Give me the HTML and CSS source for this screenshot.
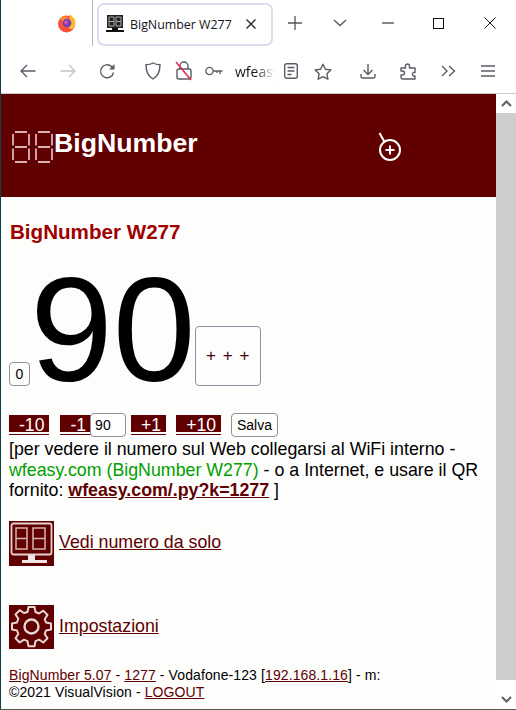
FILE: index.html
```html
<!DOCTYPE html>
<html lang="it">
<head>
  <meta charset="UTF-8" />
  <title>BigNumber W277</title>
  <link rel="stylesheet" href="styles.css">
</head>
<body>
  <div class="window">

    <!-- Browser tab strip -->
    <div class="tabbar">
      <svg class="ff-logo" width="20" height="20" viewBox="0 0 20 20">
        <circle cx="9.5" cy="11" r="8.5" fill="#f4503c"/>
        <path d="M13 1c1 2 4 3 5 6 1 3 0 6-1.500 8-2 2-4 1-5-1 3-1 4-4 2-6-1-2-1.500-4-.5-7z" fill="#fdb92e"/>
        <path d="M3 5c2-2 5-2 7-1 2 1 3 3 3 5l-4-1-3 1z" fill="#ff8a2c"/>
        <circle cx="10" cy="10" r="4.200" fill="#6a3fc0"/>
        <path d="M7 9c1-1.500 3-2 5-1-1 0-2 .5-2 1.500s1 1.500 2 1c-1 1.500-4 1.500-5-1.500z" fill="#e8569a"/>
      </svg>
      <div class="tab-sep"></div>
      <div class="tab">
        <svg class="favicon" width="18" height="18" viewBox="0 0 18 18">
          <rect x="1" y="0" width="16" height="13" fill="#222"/>
          <path d="M3 2h5v9H3zM10 2h5v9h-5zM3 6.500h5M10 6.500h5" fill="none" stroke="#aaa" stroke-width="1"/>
          <path d="M0 17h18v-2H12v-2H6v2H0z" fill="#111"/>
        </svg>
        <span class="tab-title">BigNumber W277</span>
        <svg class="tab-close" width="12" height="12" viewBox="0 0 12 12"><path d="M1.500 1.500l9 9M10.500 1.500l-9 9" stroke="#222" stroke-width="1.300"/></svg>
      </div>
      <svg class="tab-new" width="16" height="16" viewBox="0 0 16 16"><path d="M8 1v14M1 8h14" stroke="#55555f" stroke-width="1.300"/></svg>
      <svg class="tab-list" width="14" height="8" viewBox="0 0 14 8"><path d="M1 1l6 5.500L13 1" fill="none" stroke="#55555f" stroke-width="1.300"/></svg>
      <svg class="win-min" width="12" height="2" viewBox="0 0 12 2"><path d="M0 1h12" stroke="#111" stroke-width="1"/></svg>
      <svg class="win-max" width="11" height="11" viewBox="0 0 11 11"><rect x=".5" y=".5" width="10" height="10" fill="none" stroke="#111"/></svg>
      <svg class="win-close" width="12" height="12" viewBox="0 0 12 12"><path d="M.5.500l11 11M11.500.500l-11 11" stroke="#111" stroke-width="1"/></svg>
    </div>

    <!-- Browser toolbar -->
    <div class="toolbar">
      <svg class="ic ic-back" width="16" height="14" viewBox="0 0 16 14"><path d="M15.500 7H1M7 1L1 7l6 6" fill="none" stroke="#5b5b66" stroke-width="1.400"/></svg>
      <svg class="ic ic-fwd" width="16" height="14" viewBox="0 0 16 14"><path d="M.5 7H15M9 1l6 6-6 6" fill="none" stroke="#c4c2cc" stroke-width="1.400"/></svg>
      <svg class="ic ic-reload" width="17" height="17" viewBox="0 0 17 17"><path d="M14.500 9.500A6.500 6.500 0 1 1 12.500 3.500L15 6" fill="none" stroke="#5b5b66" stroke-width="1.400"/><path d="M15.500 1v5.500H10z" fill="#5b5b66"/></svg>
      <svg class="ic ic-shield" width="16" height="18" viewBox="0 0 16 18"><path d="M8 1c2 1.200 4 1.700 7 1.800 0 6-1 11-7 14.200C2 13.800 1 8.800 1 2.800 4 2.700 6 2.200 8 1z" fill="none" stroke="#5b5b66" stroke-width="1.400"/></svg>
      <svg class="ic ic-lock" width="18" height="20" viewBox="0 0 18 20"><path d="M4 8h10a2 2 0 0 1 2 2v6a2 2 0 0 1-2 2H4a2 2 0 0 1-2-2v-6a2 2 0 0 1 2-2zM5 8V5a4 4 0 0 1 8 0v3" fill="none" stroke="#5b5b66" stroke-width="1.400"/><path d="M1 1l15 18" stroke="#e22850" stroke-width="1.500"/></svg>
      <svg class="ic ic-key" width="18" height="10" viewBox="0 0 18 10"><circle cx="4.500" cy="5" r="3.600" fill="none" stroke="#5b5b66" stroke-width="1.300"/><path d="M8 5h9.500M15 5v3M12 5v2" stroke="#5b5b66" stroke-width="1.300" fill="none"/></svg>
      <span class="url">wfeasy</span>
      <svg class="ic ic-reader" width="14" height="16" viewBox="0 0 14 16"><rect x=".7" y=".7" width="12.600" height="14.600" rx="2" fill="none" stroke="#5b5b66" stroke-width="1.400"/><path d="M3.500 4.500h7M3.500 8h7M3.500 11.500h4" stroke="#5b5b66" stroke-width="1.300"/></svg>
      <svg class="ic ic-star" width="18" height="17" viewBox="0 0 18 17"><path d="M9 1.200l2.400 5 5.500.8-4 3.800 1 5.400L9 13.600l-4.900 2.600 1-5.400-4-3.800 5.500-.8z" fill="none" stroke="#5b5b66" stroke-width="1.400" stroke-linejoin="round"/></svg>
      <svg class="ic ic-down" width="16" height="16" viewBox="0 0 16 16"><path d="M8 1v10M3.500 7L8 11.500 12.500 7M1 11v2.500a1.500 1.500 0 0 0 1.500 1.500h11a1.500 1.500 0 0 0 1.500-1.500V11" fill="none" stroke="#5b5b66" stroke-width="1.400"/></svg>
      <svg class="ic ic-ext" width="16" height="17" viewBox="0 0 16 17"><path d="M1 5h4.500V3a2 2 0 0 1 4 0v2H15v4.500h-1.500a2 2 0 0 0 0 3.500H15v3H2.500A1.500 1.500 0 0 1 1 14.500V12h1.500a2 2 0 0 0 0-4H1z" fill="none" stroke="#5b5b66" stroke-width="1.400" stroke-linejoin="round"/></svg>
      <svg class="ic ic-more" width="15" height="12" viewBox="0 0 15 12"><path d="M1 1l5 5-5 5M8 1l5.500 5L8 11" fill="none" stroke="#5b5b66" stroke-width="1.400"/></svg>
      <svg class="ic ic-menu" width="14" height="12" viewBox="0 0 14 12"><path d="M0 1h14M0 6h14M0 11h14" stroke="#5b5b66" stroke-width="1.400"/></svg>
    </div>

    <div class="viewport">
      <div class="page">
        <header class="site-head">
          <svg class="logo" width="42" height="32" viewBox="0 0 42 32">
            <path d="M3 1h12M1 3v11.500M17 3v11.500M3 16h12M1 17.500V29M17 17.500V29M3 31h12M26 1h12M24 3v11.500M40 3v11.500M26 16h12M24 17.500V29M40 17.500V29M26 31h12" fill="none" stroke="#d9b3b3" stroke-width="1.800"/>
          </svg>
          <span class="site-name">BigNumber</span>
        </header>

        <main>
          <h1>BigNumber W277</h1>

          <div class="counter">
            <button class="btn btn-zero">0</button>
            <span class="big-number">90</span>
            <button class="btn btn-more">+ + +</button>
          </div>

          <div class="controls">
            <a class="step step-ten" href="#">-10</a>
            <a class="step step-minus" href="#">-1</a>
            <input class="num-input" type="text" value="90">
            <a class="step" href="#">+1</a>
            <a class="step" href="#">+10</a>
            <button class="btn btn-save">Salva</button>
          </div>

          <p class="info">[per vedere il numero sul Web collegarsi al WiFi interno - <span class="ok">wfeasy.com (BigNumber W277)</span> - o a Internet, e usare il QR fornito: <a class="qr" href="#">wfeasy.com/.py?k=1277</a> ]</p>

          <div class="menu-row row-view">
            <svg class="menu-icon" width="45" height="45" viewBox="0 0 45 45">
              <rect width="45" height="45" fill="#600000"/>
              <rect x="2.500" y="2.500" width="40" height="31" rx="2" fill="none" stroke="#e6d0d0" stroke-width="1.800"/>
              <path d="M7 7h11v10.500H7zM7 17.500V28h11V17.500M24 7h12v10.500H24zM24 17.500V28h12V17.500" fill="none" stroke="#d8b4b4" stroke-width="1.500"/>
              <path d="M19 34h7v5h12v3H13v-3h6z" fill="#f0e4e4"/>
            </svg>
            <a href="#">Vedi numero da solo</a>
          </div>

          <div class="menu-row row-settings">
            <svg class="menu-icon" width="45" height="44" viewBox="0 0 45 44">
              <rect width="45" height="44" fill="#600000"/>
              <path d="M19.500 3h6l1 5 3.500 1.500 4.300-2.800 4.200 4.200-2.800 4.300L37 18.500l5 1v6l-5 1-1.300 3.500 2.800 4.300-4.200 4.200-4.300-2.800-3.500 1.500-1 5h-6l-1-5-3.500-1.500-4.300 2.800-4.200-4.200 2.800-4.300L8 26.500l-5-1v-6l5-1 1.300-3.800-2.800-4.300 4.200-4.200 4.300 2.800L18.500 8z" transform="translate(0 -1)" fill="none" stroke="#e6d6d6" stroke-width="2" stroke-linejoin="round"/>
              <circle cx="22.500" cy="21.500" r="7" fill="none" stroke="#e6d6d6" stroke-width="2.400"/>
            </svg>
            <a href="#">Impostazioni</a>
          </div>

          <footer class="foot">
            <a href="#">BigNumber 5.07</a> - <a href="#">1277</a> - Vodafone-123 [<a href="#">192.168.1.16</a>] - m:<br>
            ©2021 VisualVision - <a href="#">LOGOUT</a>
          </footer>
        </main>
      </div>

      <div class="scrollbar">
        <div class="sb-btn"><svg width="11" height="7" viewBox="0 0 11 7"><path d="M1 6l4.500-4.500L10 6" fill="none" stroke="#606060" stroke-width="2"/></svg></div>
        <div class="sb-thumb"></div>
        <div class="sb-btn sb-bottom"><svg width="11" height="7" viewBox="0 0 11 7"><path d="M1 1l4.500 4.500L10 1" fill="none" stroke="#606060" stroke-width="2"/></svg></div>
      </div>

      <!-- mouse pointer caught in the screenshot -->
      <svg class="pointer" width="24" height="32" viewBox="0 0 24 32">
        <path d="M1.500 1l5 9" stroke="#fff" stroke-width="2"/>
        <circle cx="12" cy="18" r="10" fill="none" stroke="#fff" stroke-width="2"/>
        <path d="M12 13.500v9M7.500 18h9" stroke="#fff" stroke-width="2"/>
      </svg>
    </div>
  </div>
</body>
</html>
```

FILE: styles.css
```css
/* Global Reset */
* {
  margin: 0;
  padding: 0;
  box-sizing: border-box;
}

html, body {
  height: 710px;
  overflow: hidden;
}

body {
  font-family: 'Liberation Sans', Arial, sans-serif;
  background: #fff;
  color: #000;
}

.window {
  height: 710px;
  display: flex;
  flex-direction: column;
  border-left: 1px solid #0f3f4c;
  border-bottom: 1px solid #555;
}

/* Tab strip */
.tabbar {
  height: 46px;
  display: flex;
  align-items: center;
  background: #fff;
  flex: none;
}
.ff-logo { margin-left: 56px; }
.tab-sep {
  width: 1px;
  height: 46px;
  margin-left: 15px;
  background: #b9b9b9;
}
.tab {
  width: 176px;
  height: 43px;
  margin-left: 4px;
  margin-top: 2px;
  display: flex;
  align-items: center;
  padding-left: 7px;
  border: 2px solid #e2d8ef;
  border-radius: 7px;
}
.tab-title {
  font-family: 'Open Sans', sans-serif;
  font-size: 12.4px;
  color: #15141a;
  margin-left: 6px;
  white-space: nowrap;
}
.tab-close { margin-left: 13px; }
.tab-new { margin-left: 14px; }
.tab-list { margin-left: 30px; }
.win-min { margin-left: 35px; }
.win-max { margin-left: 39px; }
.win-close { margin-left: 40px; }

/* Toolbar */
.toolbar {
  height: 48px;
  display: flex;
  align-items: center;
  flex: none;
  padding-top: 3px;
  background: #fff;
  border-bottom: 1px solid #ccc;
}
.ic { flex: none; }
.ic-back { margin-left: 19px; }
.ic-fwd { margin-left: 24px; }
.ic-reload { margin-left: 23px; }
.ic-shield { margin-left: 29px; }
.ic-lock { margin-left: 14px; }
.ic-key { margin-left: 12px; }
.url {
  width: 40px;
  margin-left: 12px;
  overflow: hidden;
  font-family: 'Open Sans', sans-serif;
  font-size: 14px;
  color: #15141a;
  -webkit-mask-image: linear-gradient(to right, #000 50%, transparent);
  mask-image: linear-gradient(to right, #000 50%, transparent);
}
.ic-reader { margin-left: 9px; }
.ic-star { margin-left: 16px; }
.ic-down { margin-left: 28px; }
.ic-ext { margin-left: 24px; }
.ic-more { margin-left: 25px; }
.ic-menu { margin-left: 25px; }

/* Page area */
.viewport {
  flex: 1;
  display: flex;
  position: relative;
  min-height: 0;
}
.page {
  flex: 1;
  background: #fdfdfc;
  overflow: hidden;
}
.site-head {
  height: 103px;
  background: #600000;
  display: flex;
  align-items: center;
  padding-left: 11px;
}
.site-name {
  font-size: 26.67px;
  font-weight: bold;
  color: #fff;
  margin-top: -5px;
}
.logo { margin-top: 3px; }

main { padding: 0 8px; }

h1 {
  font-size: 20.6px;
  line-height: 24px;
  color: #a00000;
  margin-top: 23px;
  padding-left: 1px;
}

/* Big counter */
.counter {
  height: 142px;
  display: flex;
  align-items: flex-end;
}
.big-number {
  font-size: 149px;
  line-height: 112px;
  margin-right: -1px;
}
.btn {
  font-family: 'Liberation Sans', Arial, sans-serif;
  background: #fdfdfc;
  color: #000;
  border: 1px solid #8f8f9d;
  border-radius: 4px;
  cursor: pointer;
}
.btn-zero {
  width: 21px;
  height: 24px;
  font-size: 14px;
}
.btn-more {
  width: 66px;
  height: 60px;
  font-size: 17px;
  word-spacing: 2px;
  color: #400010;
}

/* Step row */
.controls {
  display: flex;
  align-items: center;
  height: 24px;
  margin-top: 27px;
}
.step {
  display: block;
  height: 17px;
  line-height: 20px;
  padding: 0 5px 0 10px;
  background: #600000;
  color: #fff;
  font-size: 17.6px;
  text-decoration: none;
  box-shadow: 0 2px 0 #fdfdfc, 0 3px 0 #600000;
  margin-right: 10px;
  margin-top: -3px;
}
.step-ten { margin-right: 11px; }
.step-minus { margin-right: -1px; }
.num-input {
  width: 36px;
  height: 24px;
  margin-right: 5px;
  padding-left: 4px;
  font-family: 'Liberation Sans', Arial, sans-serif;
  font-size: 14px;
  border: 1px solid #8f8f9d;
  border-radius: 4px;
  background: #fff;
}
.btn-save {
  width: 47px;
  height: 24px;
  font-size: 14px;
}

.info {
  font-size: 17.8px;
  line-height: 20.500px;
  margin-top: 2px;
}
.ok { color: #00a000; }
.qr {
  font-weight: bold;
  color: #600000;
}

/* Menu rows */
.menu-row {
  display: flex;
  align-items: center;
  gap: 5px;
}
.menu-row a { font-size: 17.8px; color: #600000; margin-top: -2px; }
.row-view { margin-top: 20px; }
.row-settings { margin-top: 39px; }
.row-settings a { margin-top: 0; }
.menu-icon { flex: none; }

.foot {
  font-size: 14px;
  letter-spacing: .1px;
  line-height: 17px;
  margin-top: 18px;
}
.foot a { color: #600000; }

/* Fake scrollbar */
.scrollbar {
  width: 20px;
  flex: none;
  display: flex;
  flex-direction: column;
  background: #fff;
}
.sb-btn {
  height: 19px;
  flex: none;
  display: flex;
  align-items: center;
  justify-content: center;
}
.sb-thumb {
  height: 567px;
  background: #cdcdcd;
}
.sb-bottom {
  height: 29px;
  padding-top: 10px;
}

.pointer {
  position: absolute;
  left: 377px;
  top: 38px;
}
```
